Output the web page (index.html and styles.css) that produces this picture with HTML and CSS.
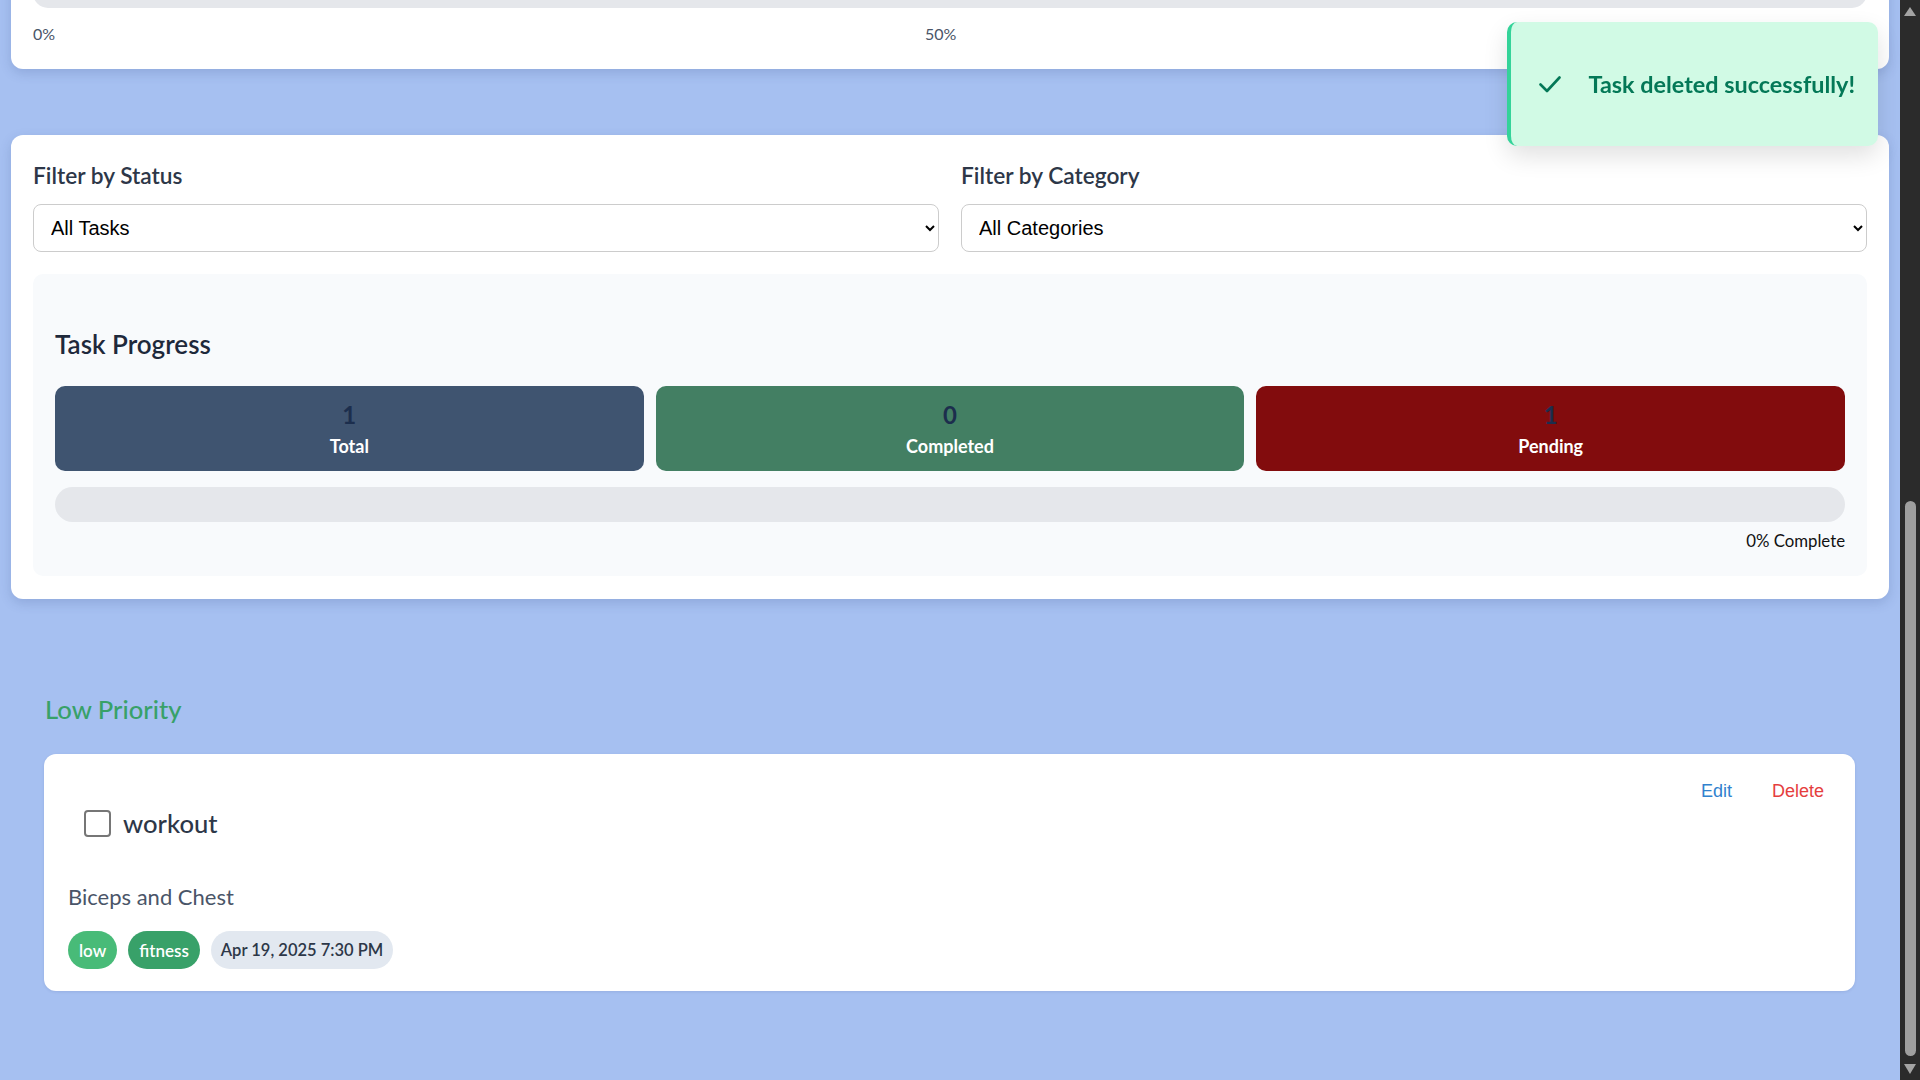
FILE: index.html
```html
<!DOCTYPE html>
<html lang="en">
<head>
<meta charset="utf-8">
<title>Tasks</title>
<link rel="stylesheet" href="styles.css">
</head>
<body>
<div class="screen">
  <main class="page">
    <section class="card overview">
      <div class="track"></div>
      <div class="scale"><span>0%</span><span>50%</span><span>100%</span></div>
    </section>

    <section class="card controls">
      <div class="filters">
        <div class="filter">
          <label class="filter-label" for="status">Filter by Status</label>
          <select id="status" class="select">
            <option>All Tasks</option>
            <option>Completed</option>
            <option>Pending</option>
          </select>
        </div>
        <div class="filter">
          <label class="filter-label" for="category">Filter by Category</label>
          <select id="category" class="select">
            <option>All Categories</option>
            <option>fitness</option>
          </select>
        </div>
      </div>

      <div class="progress-panel">
        <h3 class="progress-title">Task Progress</h3>
        <div class="stats">
          <div class="stat stat-total"><div class="stat-num">1</div><div class="stat-label">Total</div></div>
          <div class="stat stat-done"><div class="stat-num">0</div><div class="stat-label">Completed</div></div>
          <div class="stat stat-pending"><div class="stat-num">1</div><div class="stat-label">Pending</div></div>
        </div>
        <div class="bar"><div class="bar-fill" style="width:0%"></div></div>
        <div class="bar-text">0% Complete</div>
      </div>
    </section>

    <section class="group">
      <h2 class="group-title">Low Priority</h2>
      <article class="task">
        <div class="task-head">
          <div class="task-title">
            <span class="check"></span>
            <span class="task-name">workout</span>
          </div>
          <div class="task-actions">
            <button class="act act-edit">Edit</button>
            <button class="act act-delete">Delete</button>
          </div>
        </div>
        <p class="task-desc">Biceps and Chest</p>
        <div class="tags">
          <span class="tag tag-low">low</span>
          <span class="tag tag-cat">fitness</span>
          <span class="tag tag-date">Apr 19, 2025 7:30 PM</span>
        </div>
      </article>
    </section>
  </main>

  <div class="scrollbar">
    <span class="sb-up"></span>
    <span class="sb-thumb"></span>
    <span class="sb-down"></span>
  </div>
</div>

<div class="toast">
  <svg class="toast-icon" width="22" height="17" viewBox="0 0 22 17"><path d="M1.5 8.5 L8 15 L20.5 1.5" fill="none" stroke="#047857" stroke-width="2.6" stroke-linecap="round" stroke-linejoin="round"/></svg>
  <span class="toast-text">Task deleted successfully!</span>
</div>
</body>
</html>
```

FILE: styles.css
```css
* { box-sizing: border-box; }

html, body {
  margin: 0;
  height: 1080px;
  overflow: hidden;
  font-family: Lato, "Noto Sans", sans-serif;
}

.screen {
  display: flex;
  height: 1080px;
}

.page {
  flex: 1;
  background: #a6c0f1;
  padding: 0 11px;
  overflow: hidden;
}

.card {
  background: #ffffff;
  border-radius: 12px;
  box-shadow: 0 4px 12px rgba(40, 60, 120, 0.18);
}

/* top (scrolled) card */
.overview {
  margin-top: -44px;
  padding: 22px 22px 23px;
}

.track {
  height: 30px;
  background: #e5e7eb;
  border-radius: 15px;
}

.scale {
  display: flex;
  justify-content: space-between;
  margin-top: 14px;
  font-size: 16px;
  line-height: 24px;
  color: #4a5568;
}

/* filters + progress card */
.controls {
  margin-top: 66px;
  padding: 25px 22px 23px;
}

.filters {
  display: grid;
  grid-template-columns: 1fr 1fr;
  gap: 22px;
}

.filter-label {
  display: block;
  font-size: 22.7px;
  font-weight: 600;
  line-height: 31px;
  color: #2d3748;
  margin-bottom: 13px;
}

.select {
  display: block;
  width: 100%;
  height: 48px;
  padding: 0 13px;
  border: 1px solid #cccccc;
  border-radius: 8px;
  background: #ffffff;
  font-family: "Liberation Sans", Arial, sans-serif;
  font-size: 20px;
  color: #000000;
}

.progress-panel {
  margin-top: 22px;
  background: #f8fafc;
  border-radius: 10px;
  padding: 22px 22px 23px;
}

.progress-title {
  margin: 33px 0 26px;
  font-size: 26px;
  font-weight: 600;
  line-height: 31px;
  color: #1e293b;
}

.stats {
  display: grid;
  grid-template-columns: repeat(3, 1fr);
  gap: 12px;
}

.stat {
  border-radius: 10px;
  padding: 14px 10px;
  text-align: center;
}

.stat-total { background: #3f5470; }
.stat-done { background: #437f63; }
.stat-pending { background: #820c0d; }

.stat-num {
  font-size: 24px;
  font-weight: 700;
  line-height: 29px;
  color: #1c2e4d;
}

.stat-label {
  margin-top: 6px;
  font-size: 18px;
  font-weight: 700;
  line-height: 22px;
  color: #ffffff;
}

.bar {
  margin-top: 16px;
  height: 35px;
  background: #e5e7eb;
  border-radius: 18px;
  overflow: hidden;
}

.bar-fill {
  height: 100%;
  background: #437f63;
}

.bar-text {
  margin-top: 7px;
  text-align: right;
  font-size: 16.8px;
  line-height: 24px;
  color: #111111;
}

/* task group */
.group {
  margin-top: 94px;
  padding: 0 34px 0 33px;
}

.group-title {
  margin: 0 0 28px;
  padding-left: 1px;
  font-size: 25.6px;
  font-weight: 500;
  line-height: 33px;
  color: #38a169;
}

.task {
  background: #ffffff;
  border-radius: 12px;
  box-shadow: 0 1px 3px rgba(40, 60, 120, 0.12);
  padding: 22px 24px;
}

.task-head {
  display: flex;
  justify-content: space-between;
  align-items: flex-start;
}

.task-title {
  display: flex;
  align-items: center;
  gap: 12px;
  margin-top: 32px;
  padding-left: 16px;
}

.check {
  width: 27px;
  height: 27px;
  border: 2px solid #767676;
  border-radius: 4px;
  background: #ffffff;
}

.task-name {
  font-size: 25.6px;
  font-weight: 500;
  line-height: 31px;
  color: #2d3748;
}

.task-actions {
  display: flex;
  gap: 24px;
  margin-top: 3px;
  margin-right: -1px;
}

.act {
  background: none;
  border: none;
  padding: 2px 8px;
  font-family: "Liberation Sans", Arial, sans-serif;
  font-size: 18px;
  cursor: pointer;
}

.act-edit { color: #3182ce; }
.act-delete { color: #e53e3e; }

.task-desc {
  margin: 41px 0 0;
  font-size: 22px;
  line-height: 33px;
  color: #4a5568;
}

.tags {
  display: flex;
  gap: 11px;
  margin-top: 18px;
}

.tag {
  height: 38px;
  padding: 0 11px;
  border-radius: 19px;
  display: flex;
  align-items: center;
  font-size: 17px;
  font-weight: 600;
}

.tag-low { background: #48bb78; color: #ffffff; }
.tag-cat { background: #38a169; color: #ffffff; }
.tag-date { background: #e2e8f0; color: #2d3748; padding: 0 10px; font-size: 16.5px; }

/* scrollbar */
.scrollbar {
  width: 20px;
  background: #2b2b2b;
  display: flex;
  flex-direction: column;
  align-items: center;
}

.sb-up {
  margin-top: 7px;
  width: 0;
  height: 0;
  border-left: 6px solid transparent;
  border-right: 6px solid transparent;
  border-bottom: 9px solid #a3a3a3;
}

.sb-thumb {
  margin-top: auto;
  width: 11px;
  height: 555px;
  border-radius: 6px;
  background: #9f9f9f;
}

.sb-down {
  margin: 8px 0 6px;
  width: 0;
  height: 0;
  border-left: 6px solid transparent;
  border-right: 6px solid transparent;
  border-top: 10px solid #a3a3a3;
}

/* toast */
.toast {
  position: fixed;
  top: 22px;
  right: 42px;
  height: 124px;
  display: flex;
  align-items: center;
  gap: 27px;
  padding: 0 23px 0 28px;
  background: #d1fae5;
  border-left: 4px solid #34d399;
  border-radius: 10px;
  box-shadow: 0 10px 25px rgba(0, 0, 0, 0.12);
}

.toast-icon { display: block; }

.toast-text {
  font-size: 23.4px;
  font-weight: 700;
  color: #047857;
}
```
